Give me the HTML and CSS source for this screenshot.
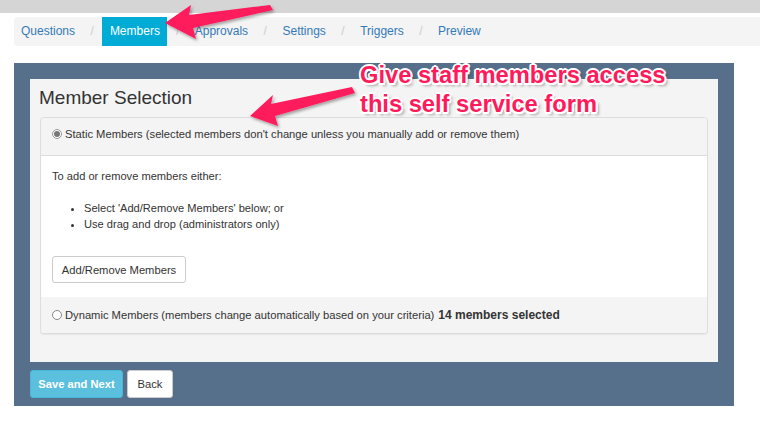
FILE: index.html
```html
<!DOCTYPE html>
<html>
<head>
<meta charset="utf-8">
<link rel="stylesheet" href="styles.css">
</head>
<body>
<div class="topbar"></div>
<nav class="steps">
  <a class="step">Questions</a><span class="sep">/</span>
  <a class="step active">Members</a><span class="sep">/</span>
  <a class="step">Approvals</a><span class="sep">/</span>
  <a class="step">Settings</a><span class="sep">/</span>
  <a class="step">Triggers</a><span class="sep">/</span>
  <a class="step">Preview</a>
</nav>
<main class="frame">
  <section class="card">
    <h2 class="title">Member Selection</h2>
    <div class="box">
      <div class="box-head">
        <label class="radio-row"><span class="radio checked"></span>Static Members (selected members don't change unless you manually add or remove them)</label>
      </div>
      <div class="box-body">
        <p class="intro">To add or remove members either:</p>
        <ul class="list">
          <li>Select 'Add/Remove Members' below; or</li>
          <li>Use drag and drop (administrators only)</li>
        </ul>
        <button class="btn">Add/Remove Members</button>
      </div>
      <div class="box-foot">
        <label class="radio-row"><span class="radio"></span>Dynamic Members (members change automatically based on your criteria) <b class="count">14 members selected</b></label>
      </div>
    </div>
  </section>
  <div class="actions">
    <button class="btn btn-info">Save and Next</button>
    <button class="btn btn-back">Back</button>
  </div>
</main>
<div class="callout">Give staff members access<br>this self service form</div>
<svg class="arrows" width="760" height="424" viewBox="0 0 760 424">
  <defs>
    <filter id="sh" x="-20%" y="-50%" width="140%" height="200%">
      <feDropShadow dx="1.5" dy="2" stdDeviation="1.5" flood-color="#000" flood-opacity="0.35"/>
    </filter>
  </defs>
  <polygon filter="url(#sh)" fill="#ff1a5b" points="165,23 191,5 189,15 270,5 273,10 193,28 196,39"/>
  <polygon filter="url(#sh)" fill="#ff1a5b" points="250,116 273,95 271,104 352,87 355,93 275,116 278,126"/>
</svg>
</body>
</html>
```
FILE: styles.css
```css
* { box-sizing: border-box; }
html, body { margin: 0; padding: 0; background: #fff; }
body {
  font-family: Arial, "Liberation Sans", Helvetica, sans-serif;
  font-size: 11.2px;
  color: #333;
  width: 760px;
  height: 424px;
  overflow: hidden;
  position: relative;
}
.topbar { height: 13px; background: #d5d5d5; }
.steps {
  margin: 4px 0 0 14px;
  height: 29px;
  background: #f4f4f4;
  border-radius: 4px 0 0 4px;
  display: flex;
  align-items: stretch;
  padding-bottom: 1px;
}
.step {
  color: #337ab7;
  font-size: 12px;
  display: flex;
  align-items: center;
  padding: 0 7px;
}
.step.active {
  background: #00acd6;
  color: #fff;
  margin-bottom: -1px;
  padding: 0 7.5px 1px;
}
.sep {
  color: #ccc;
  display: flex;
  align-items: center;
  padding: 0 8.5px;
  font-size: 12px;
}
.frame {
  margin: 17px 0 0 14px;
  width: 720px;
  height: 343px;
  background: #566f8a;
  padding: 16px 16px 0;
}
.card {
  background: #f4f4f4;
  height: 283px;
  padding: 8px 10px 0;
}
.title {
  margin: 0 0 8px -1px;
  font-weight: normal;
  font-size: 19px;
  line-height: 22px;
  color: #333;
}
.box {
  border: 1px solid #ddd;
  border-radius: 4px;
  background: #fff;
  box-shadow: 0 1px 1px rgba(0,0,0,0.06);
}
.box-head {
  height: 38px;
  background: #f4f4f4;
  border-bottom: 1px solid #ddd;
  border-radius: 4px 4px 0 0;
  padding: 10px 11px 0;
  display: flex;
  align-items: flex-start;
}
.radio-row { display: flex; align-items: center; font-size: 11.2px; line-height: 12px; color: #333; white-space: nowrap; }
.radio {
  width: 10px; height: 10px;
  border-radius: 50%;
  border: 1px solid #888;
  background: #fff;
  margin-right: 3px;
  position: relative;
  flex: none;
}
.radio.checked { border-color: #999; }
.radio.checked::after {
  content: "";
  position: absolute;
  left: 1px; top: 1px;
  width: 6px; height: 6px;
  border-radius: 50%;
  background: #777;
}
.box-body {
  padding: 14px 11px 12px;
  height: 141px;
}
.intro { margin: 0; font-size: 11.1px; line-height: 12px; }
.list {
  margin: 18px 0 0;
  padding-left: 32px;
  font-size: 11.1px;
  line-height: 16px;
}
.btn {
  font-family: inherit;
  font-size: 11.2px;
  border: 1px solid #ccc;
  border-radius: 3px;
  background: #fff;
  color: #333;
  padding: 0;
  cursor: pointer;
}
.box-body .btn {
  margin-top: 24px;
  width: 134px;
  height: 27px;
}
.box-foot {
  height: 36px;
  background: #f4f4f4;
  border-radius: 0 0 4px 4px;
  padding: 0 11px;
  display: flex;
  align-items: center;
}
.count { font-size: 12px; font-weight: bold; margin-left: 4px; color: #333; }
.actions {
  display: flex;
  gap: 4px;
  margin-top: 8px;
}
.btn-info {
  width: 93px; height: 28px;
  background: #5bc0de;
  border-color: #46b8da;
  color: #fff;
  font-weight: bold;
}
.btn-back {
  width: 46px; height: 28px;
}
.callout {
  position: absolute;
  left: 360px;
  top: 61px;
  font-size: 23.7px;
  line-height: 29px;
  font-weight: bold;
  color: #ff1a5b;
  text-shadow:
    -2px 0 0 #fff, 2px 0 0 #fff, 0 -2px 0 #fff, 0 2px 0 #fff,
    -1.5px -1.5px 0 #fff, 1.5px 1.5px 0 #fff, -1.5px 1.5px 0 #fff, 1.5px -1.5px 0 #fff,
    3px 3px 3px rgba(0,0,0,0.35);
  white-space: nowrap;
}
.arrows { position: absolute; left: 0; top: 0; pointer-events: none; }
```
